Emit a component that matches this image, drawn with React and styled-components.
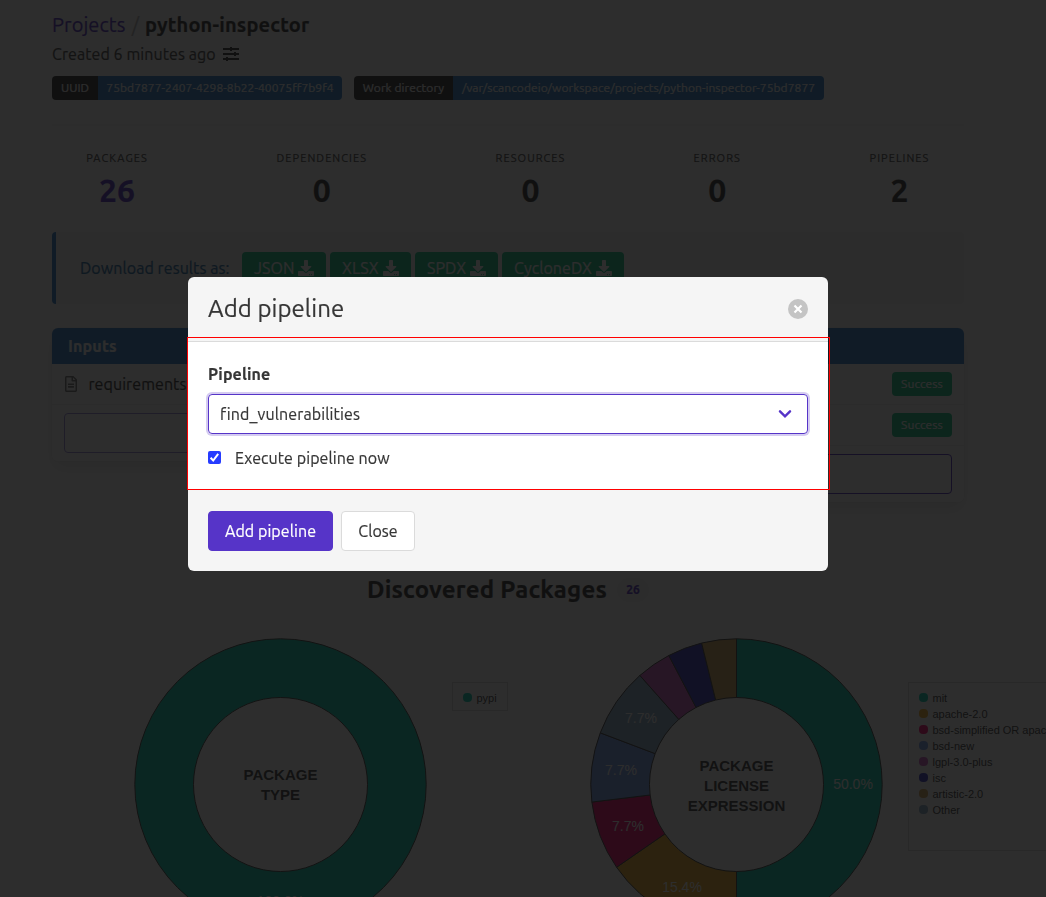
import React from "react";
import styled, { createGlobalStyle } from "styled-components";
import { FaDownload, FaRegFileAlt } from "react-icons/fa";

const Global = createGlobalStyle`
  * { box-sizing: border-box; }
  html { background: #fff; overflow: hidden; }
  body {
    margin: 0;
    overflow: hidden;
    color: #4a4a4a;
    font: 400 16px/24px Ubuntu, "Noto Sans", sans-serif;
    letter-spacing: 0.07px;
    -webkit-text-stroke: 0.2px currentColor;
  }
  button { font: inherit; letter-spacing: inherit; }
`;

const Text = styled.span`
  flex: none;
  white-space: nowrap;
  letter-spacing: ${(p) => (p.$s ? `${p.$s}px` : "inherit")};
`;
const Page = styled.main`
  width: 1046px;
  height: 897px;
  overflow: hidden;
  padding: 10px 82px 0 52px;
`;
const Title = styled.h1`
  margin: 0;
  height: 30px;
  display: flex;
  align-items: center;
  font-size: 20px;
  line-height: 30px;
  font-weight: 400;
`;
const ProjectsLink = styled.a`
  display: block;
  width: 74px;
  white-space: nowrap;
  color: #5634c8;
`;
const Slash = styled.span`
  width: 19px;
  text-align: center;
  color: #b5b5b5;
`;
const ProjectName = styled.span`
  font-weight: 700;
  color: #363636;
  white-space: nowrap;
  letter-spacing: 0.17px;
`;
const Created = styled.div`
  height: 24px;
  margin-top: 2px;
  display: flex;
  align-items: center;
`;
const CreatedText = styled.span`
  width: 171px;
  white-space: nowrap;
`;
const Tags = styled.div`
  display: flex;
  gap: 12px;
  margin-top: 10px;
  font-size: 12px;
`;
const TagGroup = styled.div`
  display: flex;
  height: 24px;
  border-radius: 4px;
  overflow: hidden;
`;
const Tag = styled.span`
  width: ${(p) => p.$w}px;
  line-height: 23px;
  text-align: center;
  white-space: nowrap;
  background: ${(p) => (p.$info ? "#3182cc" : "#363636")};
  color: #fff;
`;
const Divider = styled.div`
  height: 2px;
  margin: 24px 0;
  background: #f5f5f5;
`;
const Stats = styled.section`
  display: flex;
  justify-content: space-between;
  padding: 0 34px;
`;
const Stat = styled.div`
  width: ${(p) => p.$w}px;
  display: flex;
  flex-direction: column;
  align-items: center;
  color: ${(p) => (p.$link ? "#5634c8" : "#363636")};
`;
const Heading = styled.div`
  height: 16px;
  line-height: 16px;
  color: #4a4a4a;
  font-size: 11px;
  letter-spacing: 1.05px;
  white-space: nowrap;
`;
const Figure = styled.div`
  font-size: 32px;
  font-weight: 700;
  line-height: 48px;
`;
const Download = styled.section`
  height: 72px;
  margin-top: 18px;
  display: flex;
  align-items: center;
  background: #f5f5f5;
  border-left: 4px solid #3182cc;
  border-radius: 4px;
  padding-left: 24px;
  color: #296fa8;
`;
const DownloadLabel = styled.span`
  width: 162px;
  white-space: nowrap;
`;
const Formats = styled.div`
  display: flex;
  gap: 4px;
`;
const Format = styled.button`
  width: ${(p) => p.$w}px;
  height: 32px;
  padding: 0 12px;
  display: flex;
  align-items: center;
  justify-content: space-between;
  border: 0;
  border-radius: 4px;
  background: #18c48a;
  color: #fff;
  white-space: nowrap;
`;
const Columns = styled.section`
  display: flex;
  align-items: flex-start;
  gap: 24px;
  height: 174px;
  margin-top: 24px;
`;
const Panel = styled.div`
  width: 444px;
  height: ${(p) => p.$h}px;
  border-radius: 6px;
  box-shadow: 0 8px 16px -2px rgba(10, 10, 10, 0.1), 0 0 0 1px rgba(10, 10, 10, 0.02);
`;
const PanelHead = styled.div`
  height: 36px;
  padding: 6px 16px;
  border-radius: 6px 6px 0 0;
  background: #3182cc;
  color: #fff;
  font-weight: 700;
  letter-spacing: 0.2px;
`;
const PanelRow = styled.div`
  height: 41px;
  padding: 0 12px 0 11px;
  display: flex;
  align-items: center;
  gap: 9.5px;
  justify-content: ${(p) => (p.$end ? "flex-end" : "flex-start")};
  border-bottom: 1px solid #ededed;
  color: #363636;
`;
const Success = styled.span`
  width: 60px;
  height: 24px;
  border-radius: 4px;
  line-height: 23px;
  text-align: center;
  font-size: 12px;
  color: #fff;
  background: #18c48a;
`;
const Outline = styled.div`
  margin: 8px 12px;
  height: 40px;
  border: 1px solid ${(p) => (p.$strong ? "#5634c8" : "#9f8edc")};
  border-radius: 4px;
`;
const Discovered = styled.h2`
  margin: 70px 0 0;
  height: 36px;
  display: flex;
  justify-content: center;
  align-items: center;
  gap: 10px;
  font-size: 24px;
  font-weight: 700;
  color: #363636;
`;
const Count = styled.span`
  width: 32px;
  height: 24px;
  border-radius: 12px;
  line-height: 24px;
  text-align: center;
  background: #f5f5f5;
  color: #5634c8;
  font-size: 12px;
`;
const Charts = styled.section`
  display: flex;
  align-items: flex-start;
  width: 994px;
  height: 293px;
  margin-top: 30px;
  padding-left: 82px;
  font-family: "Liberation Sans", sans-serif;
  letter-spacing: 0;
  -webkit-text-stroke: 0;
`;
const Art = styled.svg`
  flex: none;
  margin-left: ${(p) => p.$left || 0}px;
  overflow: visible;
  stroke: #444;
  text { stroke: none; text-anchor: middle; fill: #fff; font-size: 14px; }
  .center { fill: #444; font-size: 15px; font-weight: 700; }
`;
const Legend = styled.div`
  flex: none;
  width: ${(p) => p.$w}px;
  height: ${(p) => p.$h}px;
  margin: 44px 0 0 25px;
  padding: 7px 0 0 10px;
  border: 1px solid #d9d9d9;
`;
const LegendItem = styled.div`
  height: 16px;
  display: flex;
  align-items: center;
  gap: 4.5px;
  font-size: 11px;
  line-height: 16px;
  color: #444;
  white-space: nowrap;
`;
const Dot = styled.span`
  width: 9px;
  height: 9px;
  margin-top: -1px;
  border-radius: 4px;
  background: ${(p) => p.$c};
`;
const Overlay = styled.div`
  position: fixed;
  inset: 0;
  display: flex;
  justify-content: center;
  align-items: flex-start;
  padding: 277px 30px 0 0;
  background: rgba(10, 10, 10, 0.86);
`;
const Modal = styled.section`
  position: relative;
  width: 640px;
  color: #363636;
`;
const ModalHead = styled.header`
  height: 65px;
  padding: 0 20px;
  display: flex;
  align-items: center;
  justify-content: space-between;
  border-bottom: 1px solid #dbdbdb;
  border-radius: 6px 6px 0 0;
  background: #f5f5f5;
  font-size: 24px;
`;
const ModalBody = styled.div`
  height: 147px;
  padding: 20px;
  background: #fff;
`;
const FieldLabel = styled.div`
  font-weight: 700;
  letter-spacing: 0.15px;
`;
const Select = styled.div`
  height: 40px;
  margin-top: 8px;
  padding: 0 15px 0 11px;
  display: flex;
  align-items: center;
  justify-content: space-between;
  border: 1px solid #5634c8;
  border-radius: 4px;
  box-shadow: 0 0 0 2px rgba(86, 52, 200, 0.25);
`;
const Check = styled.div`
  margin-top: 12px;
  height: 24px;
  display: flex;
  align-items: center;
  gap: 14px;
`;
const Box = styled.svg`
  display: block;
  margin-bottom: 2px;
  border-radius: 2px;
  background: #263cff;
`;
const ModalFoot = styled.footer`
  height: 82px;
  padding: 21px 20px 20px;
  display: flex;
  gap: 8px;
  border-top: 1px solid #dbdbdb;
  border-radius: 0 0 6px 6px;
  background: #f5f5f5;
`;
const Button = styled.button`
  width: ${(p) => (p.$primary ? 125 : 74)}px;
  height: 40px;
  padding: 0;
  border-radius: 4px;
  border: 1px solid ${(p) => (p.$primary ? "#5634c8" : "#dbdbdb")};
  background: ${(p) => (p.$primary ? "#5634c8" : "#fff")};
  color: ${(p) => (p.$primary ? "#fff" : "#363636")};
`;
const Frame = styled.div`
  position: absolute;
  left: -1px;
  top: 60px;
  width: 643px;
  height: 153px;
  border: 1px solid #f00;
  pointer-events: none;
`;

const R = 145.7;
const r = 87;
const C = 146.5;
const point = (rad, a) => [C + rad * Math.sin(a), C - rad * Math.cos(a)];
function slice(a, b) {
  const A = (a / 26) * 2 * Math.PI;
  const B = (b / 26) * 2 * Math.PI;
  return `M${point(R, A)}A${R},${R} 0 0 1 ${point(R, B)}L${point(r, B)}A${r},${r} 0 0 0 ${point(r, A)}Z`;
}
const slices = [
  [0, 13, "#0ccfb0"],
  [13, 17, "#f4b02a"],
  [17, 19, "#ff0a75"],
  [19, 21, "#7ca0ee"],
  [21, 23, "#91afcb"],
  [23, 24, "#d260c3"],
  [24, 25, "#3c3cc4"],
  [25, 26, "#d6a75e"],
];
const shares = [[263, 151, "50.0%"], [92, 254, "15.4%"], [38, 193, "7.7%"], [31, 137, "7.7%"], [51, 85, "7.7%"]];
const legend = [
  ["mit", "#0ccfb0"],
  ["apache-2.0", "#f4b02a"],
  ["bsd-simplified OR apache-2.0", "#ff0a75"],
  ["bsd-new", "#7ca0ee"],
  ["lgpl-3.0-plus", "#d260c3"],
  ["isc", "#3c3cc4"],
  ["artistic-2.0", "#d6a75e"],
  ["Other", "#91afcb"],
];
const stats = [
  ["PACKAGES", "26", 62],
  ["DEPENDENCIES", "0", 91],
  ["RESOURCES", "0", 70],
  ["ERRORS", "0", 47],
  ["PIPELINES", "2", 61],
];
const formats = [["JSON", 84], ["XLSX", 81], ["SPDX", 83], ["CycloneDX", 122]];

export default function App() {
  return (
    <>
      <Global />
      <Page>
        <Title>
          <ProjectsLink>Projects</ProjectsLink>
          <Slash>/</Slash>
          <ProjectName>python-inspector</ProjectName>
        </Title>
        <Created>
          <CreatedText>Created 6 minutes ago</CreatedText>
          <svg width="16" height="14" viewBox="0 0 16 14" fill="#363636">
            <path d="M0 1h16v2H0zM0 6h16v2H0zM0 11h16v2H0zM7 0h2v4H7zM11 5h2v4h-2zM3 10h2v4H3z" />
          </svg>
        </Created>
        <Tags>
          <TagGroup>
            <Tag $w={46}>UUID</Tag>
            <Tag $info $w={244}>75bd7877-2407-4298-8b22-40075ff7b9f4</Tag>
          </TagGroup>
          <TagGroup>
            <Tag $w={99}>Work directory</Tag>
            <Tag $info $w={371}>/var/scancodeio/workspace/projects/python-inspector-75bd7877</Tag>
          </TagGroup>
        </Tags>
        <Divider />
        <Stats>
          {stats.map(([name, value, w], i) => (
            <Stat key={name} $w={w} $link={i === 0}>
              <Heading>{name}</Heading>
              <Figure>{value}</Figure>
            </Stat>
          ))}
        </Stats>
        <Download>
          <DownloadLabel>Download results as:</DownloadLabel>
          <Formats>
            {formats.map(([name, w]) => (
              <Format key={name} $w={w}><Text>{name}</Text><FaDownload size={16} /></Format>
            ))}
          </Formats>
        </Download>
        <Columns>
          <Panel $h={133}>
            <PanelHead>Inputs</PanelHead>
            <PanelRow><FaRegFileAlt size={16} color="#7a7a7a" /><Text>requirements.txt</Text></PanelRow>
            <Outline />
          </Panel>
          <Panel $h={174}>
            <PanelHead />
            <PanelRow $end><Success>Success</Success></PanelRow>
            <PanelRow $end><Success>Success</Success></PanelRow>
            <Outline $strong />
          </Panel>
        </Columns>
        <Discovered><Text $s={0.2}>Discovered Packages</Text><Count>26</Count></Discovered>
        <Charts>
          <Art width="293" height="293">
            <circle cx={C} cy={C} r={(R + r) / 2} fill="none" stroke="#0ccfb0" strokeWidth={R - r} />
            <circle cx={C} cy={C} r={R} fill="none" />
            <circle cx={C} cy={C} r={r} fill="none" />
            <text className="center" x={C} y="142">PACKAGE</text>
            <text className="center" x={C} y="162">TYPE</text>
            <text x={C} y="268">100.0%</text>
          </Art>
          <Legend $w={56} $h={29}>
            <LegendItem><Dot $c="#0ccfb0" />pypi</LegendItem>
          </Legend>
          <Art $left={82} width="293" height="293">
            {slices.map(([a, b, c]) => <path key={a} d={slice(a, b)} fill={c} />)}
            {shares.map(([x, y, label]) => <text key={y} x={x} y={y}>{label}</text>)}
            <text className="center" x={C} y="133">PACKAGE</text>
            <text className="center" x={C} y="153">LICENSE</text>
            <text className="center" x={C} y="173">EXPRESSION</text>
          </Art>
          <Legend $w={200} $h={169}>
            {legend.map(([name, c]) => <LegendItem key={name}><Dot $c={c} />{name}</LegendItem>)}
          </Legend>
        </Charts>
      </Page>
      <Overlay>
        <Modal>
          <ModalHead>
            <Text>Add pipeline</Text>
            <svg width="20" height="20" viewBox="0 0 20 20">
              <circle cx="10" cy="10" r="10" fill="#c4c4c4" />
              <path d="M6.5 6.5l7 7M13.5 6.5l-7 7" stroke="#fff" strokeWidth="2.2" />
            </svg>
          </ModalHead>
          <ModalBody>
            <FieldLabel>Pipeline</FieldLabel>
            <Select>
              <Text $s={0.12}>find_vulnerabilities</Text>
              <svg width="14" height="8" viewBox="0 0 14 8" fill="none" stroke="#5634c8" strokeWidth="2.4" strokeLinecap="round">
                <path d="M2 1.3l5 5 5-5" />
              </svg>
            </Select>
            <Check>
              <Box width="13" height="13" viewBox="0 0 13 13" fill="none" stroke="#fff" strokeWidth="2">
                <path d="M2.6 6.8l2.6 2.7 5-6.6" />
              </Box>
              <Text>Execute pipeline now</Text>
            </Check>
          </ModalBody>
          <ModalFoot>
            <Button $primary>Add pipeline</Button>
            <Button>Close</Button>
          </ModalFoot>
          <Frame />
        </Modal>
      </Overlay>
    </>
  );
}
